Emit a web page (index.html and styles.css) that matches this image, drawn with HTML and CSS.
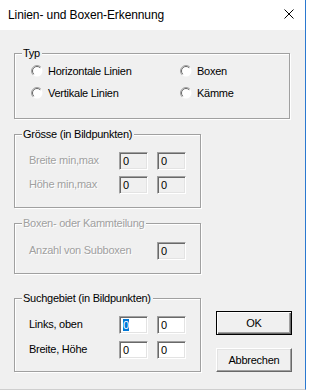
FILE: index.html
```html
<!DOCTYPE html>
<html lang="de">
<head>
  <meta charset="UTF-8">
  <title>Linien- und Boxen-Erkennung</title>
  <link rel="stylesheet" href="styles.css">
</head>
<body>
  <div class="window">
    <div class="titlebar">
      <span class="title">Linien- und Boxen-Erkennung</span>
      <svg class="close" width="10" height="10" viewBox="0 0 10 10">
        <path d="M0.5 0.5L9.5 9.5M9.5 0.5L0.5 9.5" stroke="#000" stroke-width="1" fill="none"/>
      </svg>
    </div>

    <div class="client">
      <!-- Typ -->
      <div class="group typ">
        <span class="caption">Typ</span>
        <div class="radio-grid">
          <label class="radio"><svg class="dot" width="12" height="12" viewBox="0 0 12 12"><circle cx="6" cy="6" r="5.5" fill="#fff"/><path d="M2.1 9.9A5.5 5.5 0 0 1 9.9 2.1" stroke="#a0a0a0" fill="none"/><path d="M2.8 9.2A4.5 4.5 0 0 1 9.2 2.8" stroke="#696969" fill="none"/></svg>Horizontale Linien</label>
          <label class="radio"><svg class="dot" width="12" height="12" viewBox="0 0 12 12"><circle cx="6" cy="6" r="5.5" fill="#fff"/><path d="M2.1 9.9A5.5 5.5 0 0 1 9.9 2.1" stroke="#a0a0a0" fill="none"/><path d="M2.8 9.2A4.5 4.5 0 0 1 9.2 2.8" stroke="#696969" fill="none"/></svg>Boxen</label>
          <label class="radio"><svg class="dot" width="12" height="12" viewBox="0 0 12 12"><circle cx="6" cy="6" r="5.5" fill="#fff"/><path d="M2.1 9.9A5.5 5.5 0 0 1 9.9 2.1" stroke="#a0a0a0" fill="none"/><path d="M2.8 9.2A4.5 4.5 0 0 1 9.2 2.8" stroke="#696969" fill="none"/></svg>Vertikale Linien</label>
          <label class="radio"><svg class="dot" width="12" height="12" viewBox="0 0 12 12"><circle cx="6" cy="6" r="5.5" fill="#fff"/><path d="M2.1 9.9A5.5 5.5 0 0 1 9.9 2.1" stroke="#a0a0a0" fill="none"/><path d="M2.8 9.2A4.5 4.5 0 0 1 9.2 2.8" stroke="#696969" fill="none"/></svg>Kämme</label>
        </div>
      </div>

      <!-- Grösse -->
      <div class="group small groesse">
        <span class="caption">Grösse (in Bildpunkten)</span>
        <div class="field-grid">
          <span class="lbl disabled">Breite min,max</span>
          <span class="edit off">0</span>
          <span class="edit off">0</span>
          <span class="lbl disabled">Höhe min,max</span>
          <span class="edit off">0</span>
          <span class="edit off">0</span>
        </div>
      </div>

      <!-- Boxen- oder Kammteilung -->
      <div class="group small boxen">
        <span class="caption disabled">Boxen- oder Kammteilung</span>
        <div class="field-grid single">
          <span class="lbl disabled">Anzahl von Subboxen</span>
          <span class="edit off">0</span>
        </div>
      </div>

      <div class="bottom-row">
        <!-- Suchgebiet -->
        <div class="group small such">
          <span class="caption">Suchgebiet (in Bildpunkten)</span>
          <div class="field-grid wide">
            <span class="lbl">Links, oben</span>
            <span class="edit"><span class="sel">0</span></span>
            <span class="edit">0</span>
            <span class="lbl">Breite, Höhe</span>
            <span class="edit">0</span>
            <span class="edit">0</span>
          </div>
        </div>

        <div class="buttons">
          <button class="btn default">OK</button>
          <button class="btn">Abbrechen</button>
        </div>
      </div>
    </div>
  </div>
</body>
</html>
```

FILE: styles.css
```css
body {
  margin: 0;
  background: #fff;
  font-family: 'Liberation Sans', Arial, sans-serif;
  font-size: 11px;
  letter-spacing: -0.25px;
  color: #000;
}
.window {
  width: 305px;
  height: 389px;
  border-right: 1px solid #2b79d0;
  border-bottom: 1px solid #cfcfcf;
  background: #f0f0f0;
  display: flex;
  flex-direction: column;
}
.titlebar {
  height: 30px;
  background: #fff;
  display: flex;
  align-items: center;
  justify-content: space-between;
  padding: 0 11px 0 8px;
}
.title {
  font-size: 12px;
  letter-spacing: -0.1px;
  margin-top: -1px;
}
.close {
  margin-top: -2px;
}
.client {
  padding: 23px 0 0 14px;
}

/* group boxes */
.group {
  position: relative;
  box-sizing: border-box;
  border: 1px solid #a0a0a0;
  box-shadow: inset 1px 1px 0 #fff, 1px 1px 0 #fff;
}
.caption {
  position: absolute;
  top: -7px;
  left: 7px;
  padding: 0 2px 0 1px;
  background: #f0f0f0;
  line-height: 13px;
}
.disabled {
  color: #a0a0a0;
  text-shadow: 1px 1px 0 #fff;
}
.typ {
  width: 276px;
  height: 66px;
  padding: 9px 0 0 16px;
}
.small {
  width: 187px;
  height: 74px;
  margin-top: 15px;
}
.boxen {
  height: 51px;
}

/* radio buttons */
.radio-grid {
  display: grid;
  grid-template-columns: 149px auto;
  row-gap: 6px;
}
.radio {
  display: flex;
  align-items: center;
  gap: 5px;
  height: 16px;
}

/* label + edit rows */
.field-grid {
  display: grid;
  grid-template-columns: 81px 29px 29px;
  column-gap: 9px;
  row-gap: 6px;
  padding: 17px 0 0 14px;
  align-items: center;
}
.field-grid.single {
  grid-template-columns: 119px 29px;
  padding-top: 18px;
}
.field-grid.wide {
  row-gap: 7px;
}
.lbl {
  margin-top: -3px;
}
.edit {
  box-sizing: border-box;
  height: 18px;
  padding: 2px 0 0 3px;
  line-height: 13px;
  background: #fff;
  border: 1px solid;
  border-color: #a0a0a0 #fff #fff #a0a0a0;
  box-shadow: inset 1px 1px 0 #696969, inset -1px -1px 0 #e3e3e3;
}
.edit.off {
  background: #f0f0f0;
}
.sel {
  background: #0078d7;
  color: #fff;
}

/* bottom row with buttons */
.bottom-row {
  display: flex;
  margin-top: 24px;
}
.bottom-row .such {
  margin-top: 0;
}
.buttons {
  display: flex;
  flex-direction: column;
  gap: 13px;
  margin: 13px 0 0 15px;
}
.btn {
  box-sizing: border-box;
  width: 76px;
  height: 24px;
  padding: 0;
  font-family: 'Liberation Sans', Arial, sans-serif;
  font-size: 11px;
  letter-spacing: -0.25px;
  color: #000;
  background: #f0f0f0;
  border: 1px solid;
  border-color: #fff #696969 #696969 #fff;
  box-shadow: inset -1px -1px 0 #a0a0a0, inset 1px 1px 0 #e3e3e3;
}
.btn.default {
  border-color: #000;
  box-shadow: inset 1px 1px 0 #fff, inset -1px -1px 0 #696969, inset -2px -2px 0 #a0a0a0;
}
```
